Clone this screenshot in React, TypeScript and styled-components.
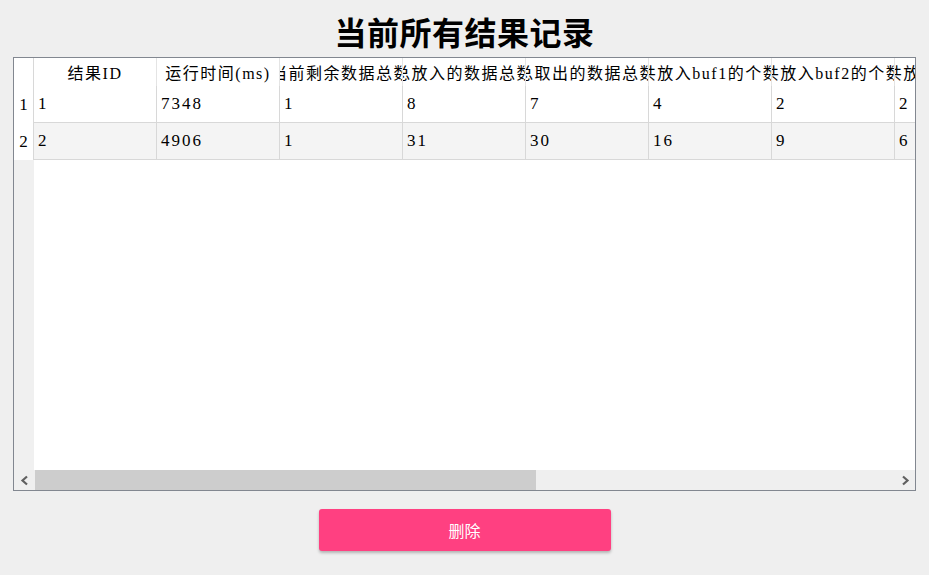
import React from "react";
import styled, { createGlobalStyle } from "styled-components";

const Global = createGlobalStyle`
  html, body { margin: 0; padding: 0; background: #efefef; }
  body { width: 929px; height: 575px; overflow: hidden; }
`;

const SERIF = `"Liberation Serif", "Noto Sans CJK SC", serif`;

const Page = styled.div`
  width: 929px;
  height: 575px;
  display: flex;
  flex-direction: column;
  align-items: center;
  background: #efefef;
`;

const Title = styled.h1`
  margin: 0;
  height: 57px;
  display: flex;
  align-items: center;
  justify-content: center;
  padding-top: 5px;
  box-sizing: border-box;
  font-family: ${SERIF};
  font-size: 32px;
  font-weight: 700;
  color: #000;
  letter-spacing: 0.5px;
`;

const Frame = styled.div`
  width: 903px;
  height: 434px;
  box-sizing: border-box;
  border: 1px solid #828790;
  display: flex;
  flex-direction: column;
  background: #fff;
`;

const GridArea = styled.div`
  flex: 1;
  display: flex;
  min-height: 0;
`;

const RowHeaderCol = styled.div`
  width: 20px;
  flex: none;
  display: flex;
  flex-direction: column;
  background: #f0f0f0;
`;

const Corner = styled.div`
  height: 28px;
  background: #fff;
  border-right: 1px solid #d8d8d8;
  box-sizing: border-box;
`;

const RowNum = styled.div`
  height: 37px;
  background: #fff;
  border-right: 1px solid #d8d8d8;
  box-sizing: border-box;
  display: flex;
  align-items: center;
  justify-content: center;
  font-family: ${SERIF};
  font-size: 17px;
  color: #000;
`;

const DataArea = styled.div`
  flex: 1;
  overflow: hidden;
  background: #fff;
  display: flex;
  flex-direction: column;
`;

const Row = styled.div<{ $alt?: boolean; $header?: boolean }>`
  display: flex;
  flex: none;
  height: ${(p) => (p.$header ? "28px" : "37px")};
  box-sizing: border-box;
  background: ${(p) => (p.$alt ? "#f4f4f4" : "#fff")};
  border-bottom: ${(p) => (p.$header ? "none" : "1px solid #d8d8d8")};
  width: max-content;
`;

const HeadCell = styled.div`
  width: 123px;
  flex: none;
  box-sizing: border-box;
  border-right: 1px solid #e4e4e4;
  overflow: hidden;
  display: flex;
  align-items: center;
  justify-content: center;
  white-space: nowrap;
  font-family: ${SERIF};
  font-size: 16px;
  letter-spacing: 1.5px;
  color: #000;
`;

const HeadText = styled.span`
  flex: none;
`;

const Cell = styled.div`
  width: 123px;
  flex: none;
  box-sizing: border-box;
  border-right: 1px solid #d8d8d8;
  overflow: hidden;
  display: flex;
  align-items: center;
  padding-left: 4px;
  white-space: nowrap;
  font-family: ${SERIF};
  font-size: 17px;
  letter-spacing: 2px;
  color: #000;
`;

const Scrollbar = styled.div`
  height: 20px;
  flex: none;
  display: flex;
  align-items: stretch;
  background: #efefef;
`;

const ArrowBtn = styled.div<{ $w: number }>`
  width: ${(p) => p.$w}px;
  flex: none;
  display: flex;
  align-items: center;
  justify-content: center;
`;

const Track = styled.div`
  flex: 1;
  display: flex;
`;

const Thumb = styled.div`
  width: 501px;
  background: #cdcdcd;
`;

const Footer = styled.div`
  padding-top: 18px;
  display: flex;
  justify-content: center;
`;

const DeleteButton = styled.button`
  width: 292px;
  height: 42px;
  border: none;
  border-radius: 3px;
  background: #ff4081;
  color: #fff;
  font-family: "Noto Sans CJK SC", "Noto Sans", sans-serif;
  font-size: 16px;
  font-weight: 400;
  box-shadow: 0 2px 3px rgba(0, 0, 0, 0.25);
  cursor: pointer;
`;

const Chevron = ({ dir }: { dir: "left" | "right" }) => (
  <svg width="9" height="11" viewBox="0 0 9 11">
    <polyline
      points={dir === "left" ? "7,1.5 2.5,5.5 7,9.5" : "2,1.5 6.5,5.5 2,9.5"}
      fill="none"
      stroke="#606060"
      strokeWidth="2.2"
    />
  </svg>
);

const headers = [
  "结果ID",
  "运行时间(ms)",
  "当前剩余数据总数",
  "总放入的数据总数",
  "总取出的数据总数",
  "共放入buf1的个数",
  "共放入buf2的个数",
  "共放入buf3的个数",
];

const rows = [
  ["1", "7348", "1", "8", "7", "4", "2", "2"],
  ["2", "4906", "1", "31", "30", "16", "9", "6"],
];

export default function App() {
  return (
    <>
      <Global />
      <Page>
        <Title>当前所有结果记录</Title>
        <Frame>
          <GridArea>
            <RowHeaderCol>
              <Corner />
              {rows.map((_, i) => (
                <RowNum key={i}>{i + 1}</RowNum>
              ))}
            </RowHeaderCol>
            <DataArea>
              <Row $header>
                {headers.map((h) => (
                  <HeadCell key={h}>
                    <HeadText>{h}</HeadText>
                  </HeadCell>
                ))}
              </Row>
              {rows.map((r, i) => (
                <Row key={i} $alt={i % 2 === 1}>
                  {r.map((v, j) => (
                    <Cell key={j}>{v}</Cell>
                  ))}
                </Row>
              ))}
            </DataArea>
          </GridArea>
          <Scrollbar>
            <ArrowBtn $w={21}>
              <Chevron dir="left" />
            </ArrowBtn>
            <Track>
              <Thumb />
            </Track>
            <ArrowBtn $w={20}>
              <Chevron dir="right" />
            </ArrowBtn>
          </Scrollbar>
        </Frame>
        <Footer>
          <DeleteButton>删除</DeleteButton>
        </Footer>
      </Page>
    </>
  );
}
